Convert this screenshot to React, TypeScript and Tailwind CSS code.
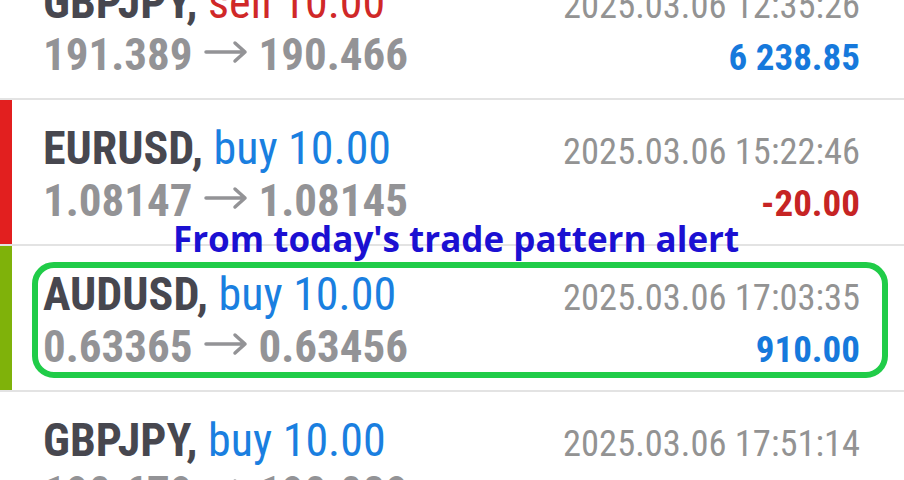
const trades = [
  { symbol: 'GBPJPY', side: 'sell', volume: '10.00', open: '191.389', close: '190.466', time: '2025.03.06 12:35:26', profit: '6 238.85', bar: '' },
  { symbol: 'EURUSD', side: 'buy', volume: '10.00', open: '1.08147', close: '1.08145', time: '2025.03.06 15:22:46', profit: '-20.00', bar: 'bg-[#e21f1f]' },
  { symbol: 'AUDUSD', side: 'buy', volume: '10.00', open: '0.63365', close: '0.63456', time: '2025.03.06 17:03:35', profit: '910.00', bar: 'bg-[#7fb20a]' },
  { symbol: 'GBPJPY', side: 'buy', volume: '10.00', open: '190.679', close: '190.089', time: '2025.03.06 17:51:14', profit: '-5 880.00', bar: '' },
]

function Arrow() {
  return (
    <svg width="44" height="24" viewBox="0 0 44 24" className="inline-block mx-[11px] align-[6px]">
      <path d="M2 12H41M31 3l10 9-10 9" fill="none" stroke="#939396" strokeWidth="3.5" strokeLinecap="round" strokeLinejoin="round" />
    </svg>
  )
}

function TradeRow({ t }: { t: (typeof trades)[number] }) {
  const loss = t.profit.startsWith('-')
  return (
    <div className="flex h-[146px] border-b-2 border-[#e3e3e3]">
      <div className={`w-[12px] shrink-0 ${t.bar}`}></div>
      <div className="flex-1 pl-[31px] pr-[44px] pt-[23px]">
        <div className="flex items-baseline justify-between h-[50px]">
          <div className="text-[46px] leading-[50px]">
            <span className="font-bold text-[#47474f]">{t.symbol},</span>{' '}
            <span className={t.side === 'sell' ? 'text-[#d02828]' : 'text-[#1a7fe0]'}>
              {t.side} {t.volume}
            </span>
          </div>
          <div className="text-[36.5px] leading-none text-[#939393]">{t.time}</div>
        </div>
        <div className="flex items-baseline justify-between h-[45px] mt-[5px]">
          <div className="text-[45px] leading-none font-bold text-[#939396] whitespace-nowrap">
            {t.open}
            <Arrow />
            {t.close}
          </div>
          <div className={`text-[37px] leading-none font-bold ${loss ? 'text-[#c62424]' : 'text-[#1679dc]'}`}>
            {t.profit}
          </div>
        </div>
      </div>
    </div>
  )
}

export default function App() {
  return (
    <div
      className="relative w-[904px] h-[480px] overflow-hidden bg-white font-stretch-condensed"
      style={{ fontFamily: '"Roboto Condensed", "Liberation Sans Narrow", Roboto, sans-serif' }}
    >
      <div className="-mt-[46px]">
        {trades.map((t, i) => (
          <TradeRow key={i} t={t} />
        ))}
      </div>

      {/* alert overlay */}
      <div
        className="absolute left-[173px] top-[221px] text-[35px] leading-none font-bold text-[#1b10d2] whitespace-nowrap"
        style={{ fontFamily: '"Open Sans", sans-serif', fontStretch: 'normal' }}
      >
        From today's trade pattern alert
      </div>
      <div className="absolute left-[32px] top-[262px] w-[856px] h-[116px] border-[6px] border-[#20cc48] rounded-[22px]"></div>
    </div>
  )
}
